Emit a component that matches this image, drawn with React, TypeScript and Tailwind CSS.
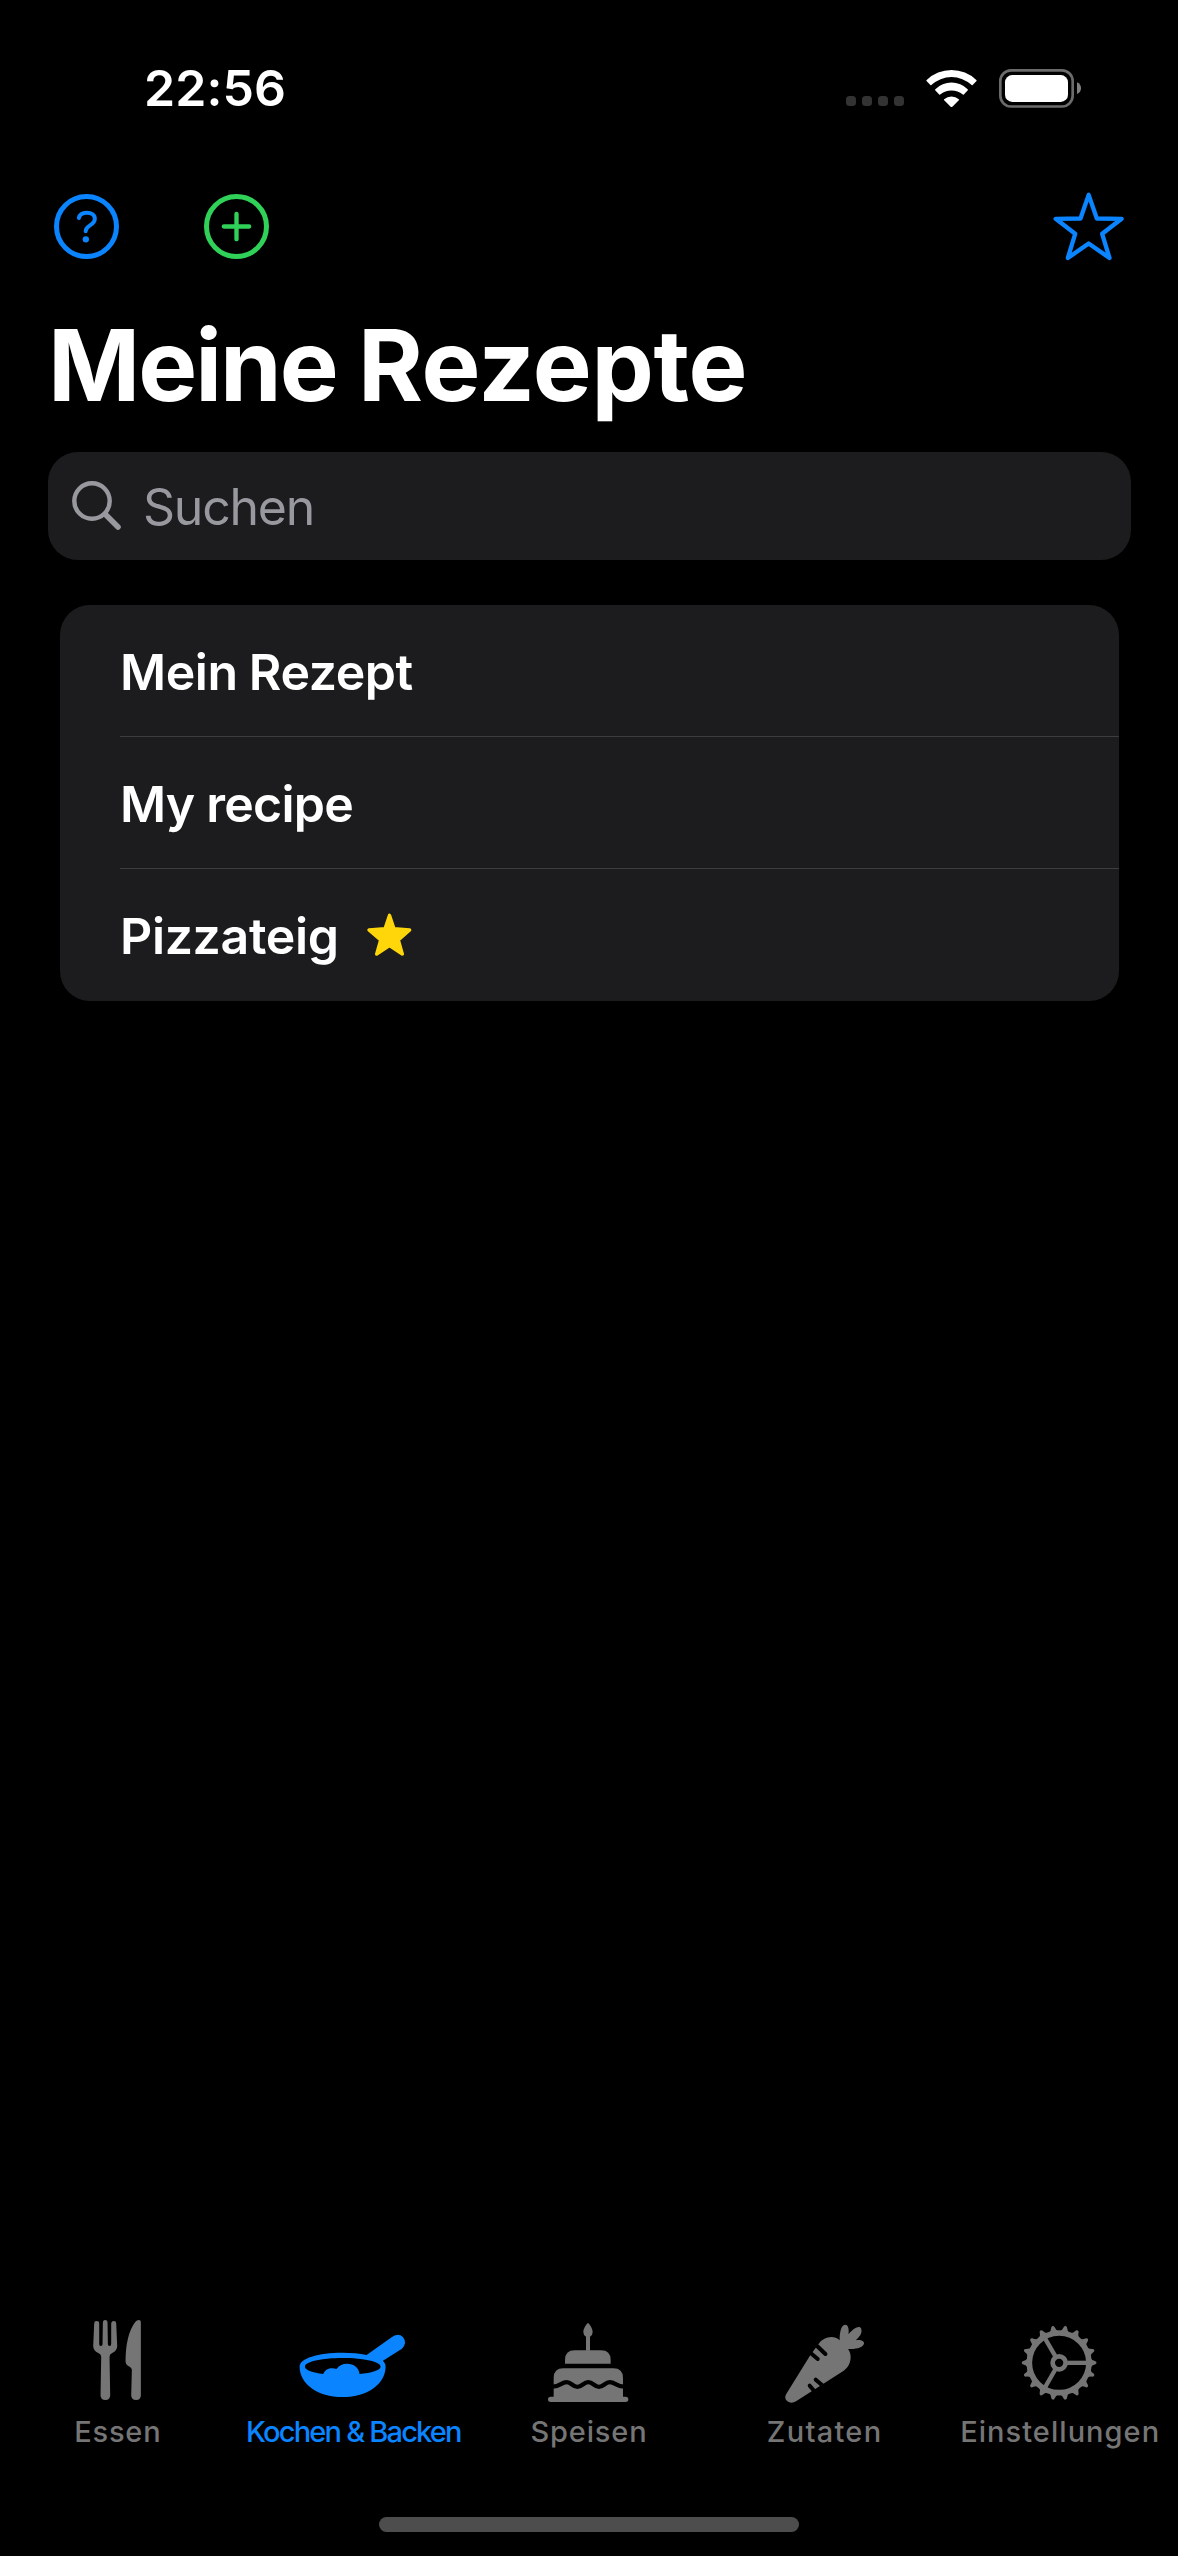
import React from "react";

const recipes = [
  { name: "Mein Rezept", tracking: "tracking-[-0.42px] [word-spacing:-1px]", favorite: false },
  { name: "My recipe", tracking: "tracking-[-0.75px]", favorite: false },
  { name: "Pizzateig", tracking: "tracking-[-0.35px]", favorite: true },
];

function StatusBar() {
  return (
    <div className="flex h-44 items-center justify-between pl-36 pr-[97px]">
      <span className="text-[50px] font-semibold leading-none tracking-[0.08px]">22:56</span>
      <div className="flex items-center">
        <div className="mt-[26px] flex gap-1.5">
          {[0, 1, 2, 3].map((dot) => (
            <span key={dot} className="size-2.5 rounded-[3.5px] bg-[#333333]" />
          ))}
        </div>
        <svg viewBox="378 84 153 116" className="ml-[22px] h-[38.67px] w-[51px]" fill="#fff">
          <path d="M379.500 120 Q378.500 118.500 380 117 A107 107 0 0 1 529 117 Q530.500 118.500 529.500 120 L518 132 Q516.500 133.500 515 132 A89 89 0 0 0 394 132 Q392.500 133.500 391 132Z" />
          <path d="M405.500 147.500 Q404.500 146 406 144.500 A69 69 0 0 1 503 144.500 Q504.500 146 503.500 147.500 L491.500 160.500 Q490 162 488.500 160.500 A55 55 0 0 0 420.500 160.500 Q419 162 417.500 160.500Z" />
          <path d="M432.500 177.500 Q431 176 432.500 174.500 A34 34 0 0 1 476.500 174.500 Q478 176 476.500 177.500 L457 197 Q454.500 199.500 452 197Z" />
        </svg>
        <svg viewBox="597 84 246 117" className="ml-[22px] h-[39px] w-[82px]">
          <rect x="601" y="88" width="217" height="108.500" rx="32" fill="none" stroke="#6b6b6b" strokeWidth="8" />
          <rect x="615" y="102" width="189" height="81" rx="22" fill="#fff" />
          <path d="M831 124 Q843 130 843 141.500 Q843 153 831 159Z" fill="#808080" />
        </svg>
      </div>
    </div>
  );
}

function NavBar() {
  return (
    <div className="flex h-[101px] items-center pl-[54px] pr-[54px]">
      <svg viewBox="162 462 195 195" className="size-[65px]" fill="none" stroke="#0a84ff" strokeLinecap="round">
        <circle cx="259.5" cy="559.5" r="90" strokeWidth="15" />
        <path d="M236.500 534 C239 522 248 518 260 518 C275 518 284.500 525 284.500 536 C284.500 546 278 551 270 556 C261 561.500 257 565 257 574" strokeWidth="12" />
        <circle cx="257.5" cy="598" r="9.500" fill="#0a84ff" stroke="none" />
      </svg>
      <svg viewBox="612 462 195 195" className="ml-[85px] size-[65px]" fill="none" stroke="#30d158" strokeLinecap="round">
        <circle cx="709.5" cy="559.5" r="90" strokeWidth="15" />
        <path d="M671.500 559.500H747.500M709.500 521.500V597.500" strokeWidth="13" />
      </svg>
      <svg
        viewBox="759 458 213 206"
        className="ml-auto h-[68.67px] w-[71px]"
        fill="none"
        stroke="#0a84ff"
        strokeWidth="13"
        strokeLinejoin="round"
      >
        <path d="M866 466.500 L890.500 537.500 L965 538.500 L906.500 583.500 L928.500 656 L866 612.500 L803.500 656 L825.500 583.500 L767 538.500 L841.500 537.500Z" />
      </svg>
    </div>
  );
}

function EssenIcon() {
  return (
    <svg viewBox="-6.6 30 360 300" className="h-[100px] w-[120px]" fill="currentColor">
      <path d="M102 70 Q102 63 109 63 Q117 63 117 70 L117 132 Q117 138 122 138 Q127 138 127 132 L128 68 Q128 60 135 60 Q142 60 142 68 L143 132 Q143 138 148 138 Q153 138 153 132 L153 70 Q154 63 161 63 Q168 63 168 70 L171 138 Q171 152 156 159 Q148 163 148 170 L150 286 Q150 300 135.500 300 Q121 300 121 286 L123 170 Q123 163 114 159 Q99 152 99 138Z" />
      <path d="M242 66 Q242 60 236 60 Q230 60 225 66 Q196 105 196 185 Q196 192 203 197 Q215 203 215 210 L213 286 Q213 300 228 300 Q242 300 242 286Z" />
    </svg>
  );
}

function KochenIcon() {
  return (
    <svg viewBox="190.2 30 360 300" className="h-[100px] w-[120px]" fill="currentColor" fillRule="evenodd">
      <path d="M210 200 C210 175 265 158 339 158 C365 158 390 160 411 165 L484 113 Q505 97 520 111 Q534 129 517 146 L460 182 Q468 190 468 200 C468 250 415 291 339 291 C263 291 210 250 210 200Z M226 200 C226 185 275 174 339 174 C403 174 453 185 453 200 C453 210 425 219 390 222 C388 203 372 191 353 191 C338 191 327 197 321 207 C305 202 287 206 281 222 C250 218 226 210 226 200Z" />
    </svg>
  );
}

function SpeisenIcon() {
  return (
    <svg viewBox="57 30 360 300" className="h-[100px] w-[120px]" fill="currentColor">
      <path d="M234 69 C239 72 248 86 248 96 Q248 106 240 110 V152 H228 V110 Q220 106 220 96 C220 86 229 72 234 69Z" />
      <path d="M165 191 V180 Q165 151 194 151 H273 Q302 151 302 180 V191Z" />
      <path d="M131 290 V234 Q131 205 160 205 H310 Q339 205 339 234 V290 H347 Q355 290 355 298 Q355 306 347 306 H122 Q114 306 114 298 Q114 290 122 290Z" />
      <path
        d="M128 260 C150 260 154 246.500 170 246.500 C184 246.500 188 260.500 202 260.500 C217 260.500 220 246.500 235 246.500 C249 246.500 253 260.500 267 260.500 C281 260.500 285 246.500 299 246.500 C315 246.500 320 260 342 260"
        fill="none"
        stroke="#000"
        strokeWidth="13"
      />
    </svg>
  );
}

function ZutatenIcon() {
  return (
    <svg viewBox="43.8 30 360 300" className="h-[100px] w-[120px]" fill="currentColor">
      <path d="M108 281 L180 165 L205 131 Q220 111 243 111 Q257 111 268 121 C267 100 272 74 284 74 C296 74 296 94 294 103 C305 89 319 79 328 81 C336 86 334 98 330 105 Q323 115 316 121 C328 118 341 122 341 130 C339 142 318 149 293 147 Q303 160 300 180 Q297 200 280 212 L137 304 Q122 313 110 303 Q100 293 108 281Z" />
      <path
        d="M178 157 L202 177 M190 137 L200 138 L225 162 M196 239 L219 259 M178 257 L192 274"
        fill="none"
        stroke="#000"
        strokeWidth="12"
        strokeLinecap="round"
        strokeLinejoin="round"
      />
    </svg>
  );
}

function EinstellungenIcon() {
  const teeth = Array.from({ length: 18 }, (_, i) => i * 20);
  return (
    <svg viewBox="180.6 30 360 300" className="h-[100px] w-[120px]" fill="none" stroke="currentColor">
      <circle cx="358" cy="188.500" r="89.500" strokeWidth="17" />
      <circle cx="358" cy="188.500" r="19.500" strokeWidth="14" />
      {[0, 120, 240].map((angle) => (
        <path key={angle} d="M382 188.500H442" strokeWidth="13" transform={`rotate(${angle} 358 188.5)`} />
      ))}
      {teeth.map((angle) => (
        <path
          key={angle}
          d="M452 174 Q456 181 467 184 Q470 185 470 188.500 Q470 192 467 193 Q456 196 452 203Z"
          fill="currentColor"
          stroke="none"
          transform={`rotate(${angle} 358 188.5)`}
        />
      ))}
    </svg>
  );
}

const tabs = [
  { label: "Essen", Icon: EssenIcon, style: "text-[#757575] tracking-[0.81px]" },
  { label: "Kochen & Backen", Icon: KochenIcon, style: "text-[#0a84ff] tracking-[-1.8px]" },
  { label: "Speisen", Icon: SpeisenIcon, style: "text-[#757575] tracking-[0.82px]" },
  { label: "Zutaten", Icon: ZutatenIcon, style: "text-[#757575] tracking-[1.28px]" },
  { label: "Einstellungen", Icon: EinstellungenIcon, style: "text-[#757575] tracking-[1.04px]" },
];

export default function App() {
  return (
    <div className="flex h-[2556px] w-[1178px] flex-col bg-black font-['Inter',sans-serif] text-white">
      <StatusBar />
      <NavBar />
      <h1 className="h-[175px] whitespace-nowrap pl-12 pt-px text-[99px] font-bold leading-[175px] tracking-[-2px]">
        Meine <span className="tracking-[-0.3px]">Rezepte</span>
      </h1>

      <div className="ml-12 flex h-[108px] w-[1083px] items-center rounded-[30px] bg-[#1c1c1e] pl-[22px] text-[#98989f]">
        <svg viewBox="70 479 54 54" className="size-[54px]" fill="none" stroke="currentColor" strokeLinecap="round">
          <circle cx="92" cy="501" r="17.700" strokeWidth="4.400" />
          <path d="M106 515 L118 527" strokeWidth="5.600" />
        </svg>
        <span className="ml-[19px] pt-0.5 text-[50px] leading-none tracking-[-1.25px]">Suchen</span>
      </div>

      <ul className="ml-[60px] mt-[45px] w-[1059px] rounded-[30px] bg-[#1c1c1e] pl-[60px]">
        {recipes.map(({ name, tracking, favorite }) => (
          <li
            key={name}
            className="flex h-[132px] items-center border-b border-[#3d3d41] pt-0.5 last:border-b-0"
          >
            <span className={`text-[50px] font-semibold leading-none ${tracking}`}>{name}</span>
            {favorite && (
              <svg
                viewBox="980 973 135 129"
                className="mb-1 ml-7 h-[43px] w-[45px]"
                fill="#ffd60a"
                stroke="#ffd60a"
                strokeWidth="10"
                strokeLinejoin="round"
              >
                <path d="M1047.500 980 L1061 1020 L1108 1024 L1074 1054 L1086 1096 L1047.500 1071 L1009 1096 L1021 1054 L986 1024 L1034 1020Z" />
              </svg>
            )}
          </li>
        ))}
      </ul>

      <nav className="mt-auto grid grid-cols-5 pb-[70px]">
        {tabs.map(({ label, Icon, style }) => (
          <div key={label} className={`flex flex-col items-center gap-1.5 ${style}`}>
            <Icon />
            <span className="whitespace-nowrap text-[29px] font-medium leading-[31px]">{label}</span>
          </div>
        ))}
      </nav>
      <div className="mx-auto mb-6 h-[15px] w-[420px] rounded-full bg-[#4d4d4d]" />
    </div>
  );
}
